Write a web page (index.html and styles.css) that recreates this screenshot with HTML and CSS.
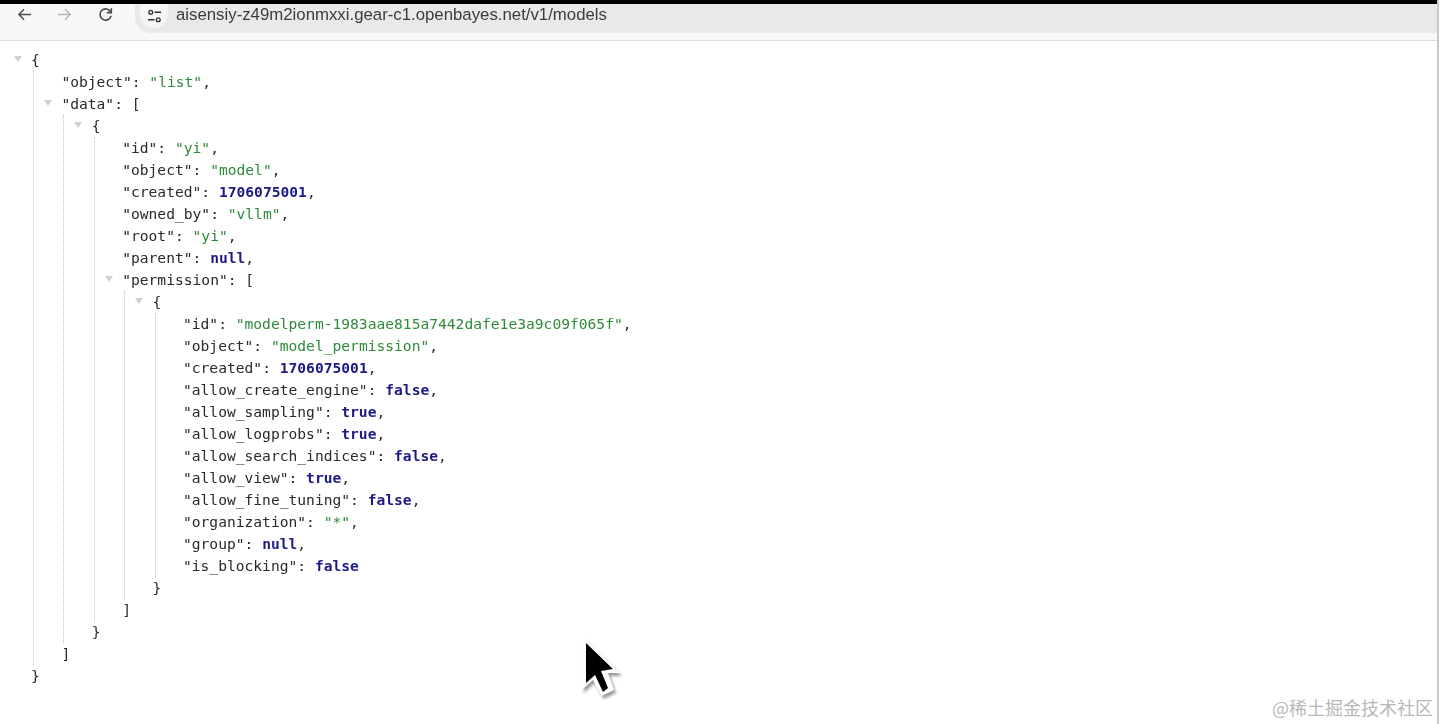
FILE: index.html
```html
<!DOCTYPE html>
<html lang="en">
<head>
<meta charset="utf-8">
<title>models</title>
<link rel="stylesheet" href="styles.css">
</head>
<body>
<div class="frame">
  <header class="chrome">
    <nav class="nav">
      <svg class="nav-icon" viewBox="0 0 16 16"><path d="M15 8H2M7.500 2.500 2 8l5.500 5.500" fill="none" stroke="#4a4a4c" stroke-width="1.5"/></svg>
      <svg class="nav-icon nav-forward" viewBox="0 0 16 16"><path d="M1 8h13M8.500 2.500 14 8l-5.500 5.500" fill="none" stroke="#b4b4b6" stroke-width="1.5"/></svg>
      <svg class="nav-icon nav-reload" viewBox="0 0 16 16"><path d="M13.500 5.200A6 6 0 1 0 14 9.500" fill="none" stroke="#48484a" stroke-width="1.7"/><path d="M14.200 1.200v4.800h-4.800" fill="none" stroke="#48484a" stroke-width="1.7"/></svg>
    </nav>
    <div class="omnibox">
      <span class="site-chip">
        <svg class="site-icon" viewBox="0 0 16 14"><circle cx="4" cy="3" r="2" fill="none" stroke="#333" stroke-width="1.500"/><path d="M8 3h7M1 11h7" stroke="#333" stroke-width="1.800"/><circle cx="12" cy="11" r="2" fill="none" stroke="#333" stroke-width="1.500"/></svg>
      </span>
      <span class="url">aisensiy-z49m2ionmxxi.gear-c1.openbayes.net/v1/models</span>
    </div>
  </header>
  <main class="json">
    <div class="line"><i class="tog"></i>{</div>
    <div class="block">
      <div class="line"><span class="k">"object"</span>: <span class="s">"list"</span>,</div>
      <div class="line"><i class="tog"></i><span class="k">"data"</span>: [</div>
      <div class="block">
        <div class="line"><i class="tog"></i>{</div>
        <div class="block">
          <div class="line"><span class="k">"id"</span>: <span class="s">"yi"</span>,</div>
          <div class="line"><span class="k">"object"</span>: <span class="s">"model"</span>,</div>
          <div class="line"><span class="k">"created"</span>: <span class="n">1706075001</span>,</div>
          <div class="line"><span class="k">"owned_by"</span>: <span class="s">"vllm"</span>,</div>
          <div class="line"><span class="k">"root"</span>: <span class="s">"yi"</span>,</div>
          <div class="line"><span class="k">"parent"</span>: <span class="n">null</span>,</div>
          <div class="line"><i class="tog"></i><span class="k">"permission"</span>: [</div>
          <div class="block">
            <div class="line"><i class="tog"></i>{</div>
            <div class="block">
              <div class="line"><span class="k">"id"</span>: <span class="s">"modelperm-1983aae815a7442dafe1e3a9c09f065f"</span>,</div>
              <div class="line"><span class="k">"object"</span>: <span class="s">"model_permission"</span>,</div>
              <div class="line"><span class="k">"created"</span>: <span class="n">1706075001</span>,</div>
              <div class="line"><span class="k">"allow_create_engine"</span>: <span class="n">false</span>,</div>
              <div class="line"><span class="k">"allow_sampling"</span>: <span class="n">true</span>,</div>
              <div class="line"><span class="k">"allow_logprobs"</span>: <span class="n">true</span>,</div>
              <div class="line"><span class="k">"allow_search_indices"</span>: <span class="n">false</span>,</div>
              <div class="line"><span class="k">"allow_view"</span>: <span class="n">true</span>,</div>
              <div class="line"><span class="k">"allow_fine_tuning"</span>: <span class="n">false</span>,</div>
              <div class="line"><span class="k">"organization"</span>: <span class="s">"*"</span>,</div>
              <div class="line"><span class="k">"group"</span>: <span class="n">null</span>,</div>
              <div class="line"><span class="k">"is_blocking"</span>: <span class="n">false</span></div>
            </div>
            <div class="line">}</div>
          </div>
          <div class="line">]</div>
        </div>
        <div class="line">}</div>
      </div>
      <div class="line">]</div>
    </div>
    <div class="line">}</div>
  </main>
</div>
<svg class="cursor" viewBox="0 0 55 75">
  <defs><filter id="cs" x="-30%" y="-30%" width="160%" height="160%"><feGaussianBlur stdDeviation="1.800"/></filter></defs>
  <path d="M7.500 7 45 43H33l6 17-12.300 6L18 50 6.700 60z" fill="#000" opacity=".4" filter="url(#cs)" transform="translate(2 3)"/>
  <path d="M7.500 7 45 43H33l6 17-12.300 6L18 50 6.700 60z" fill="#fff"/>
  <path d="M11 13l27 26-12 2 7 17-5 4-8-17-9 8z" fill="#000"/>
</svg>
<div class="mark">@稀土掘金技术社区</div>
</body>
</html>
```
FILE: styles.css
```css
html, body {
  margin: 0;
  height: 100%;
  background: #fff;
  overflow: hidden;
}
.frame {
  height: 724px;
  box-sizing: border-box;
  border-right: 2px solid #c9c9cb;
  margin-right: 1px;
  display: flex;
  flex-direction: column;
}
.chrome {
  height: 41px;
  box-sizing: border-box;
  flex: none;
  border-top: 4px solid #000;
  border-bottom: 1px solid #dedede;
  background: #f9f7f8;
  display: flex;
  align-items: flex-start;
}
.nav {
  width: 135px;
  flex: none;
  height: 20px;
  display: flex;
  align-items: center;
  padding-left: 17px;
  box-sizing: border-box;
}
.nav-icon {
  width: 15px;
  height: 15px;
  flex: none;
}
.nav-forward { margin-left: 25px; }
.nav-reload { margin-left: 26px; }
.omnibox {
  flex: 1;
  height: 29px;
  background: #e9e9eb;
  border-bottom-left-radius: 15px;
  display: flex;
  align-items: flex-start;
  filter: blur(.3px);
}
.site-chip {
  width: 28px;
  height: 24px;
  margin-left: 5px;
  border-radius: 0 0 14px 14px;
  background: #f6f6f7;
  display: flex;
  align-items: center;
  justify-content: center;
  flex: none;
}
.site-icon {
  width: 15px;
  height: 14px;
}
.url {
  margin-left: 8px;
  font: 16.8px/21px "Liberation Sans", Arial, sans-serif;
  color: #3c3c3e;
}
.json {
  padding: 8px 0 0 31px;
  font: 14.62px/22px "DejaVu Sans Mono", "Liberation Mono", monospace;
  color: #2a2a2a;
  filter: blur(.35px);
}
.line {
  height: 22px;
  position: relative;
  white-space: pre;
}
.block {
  margin-left: 2px;
  padding-left: 27.4px;
  border-left: 1px dotted #c4c4c4;
}
.tog {
  position: absolute;
  left: -17.500px;
  top: 7px;
  width: 0;
  height: 0;
  border-left: 4px solid transparent;
  border-right: 4px solid transparent;
  border-top: 6px solid #d0d0d0;
}
.k { color: #2a2a2a; }
.s { color: #2f8a3a; }
.n { color: #1c1a85; font-weight: 700; }
.cursor {
  position: absolute;
  left: 575px;
  top: 630px;
  width: 55px;
  height: 75px;
  filter: blur(.4px);
}
.mark {
  position: absolute;
  right: 7px;
  top: 695px;
  font: 18px/24px "Noto Sans CJK SC", sans-serif;
  color: #b8b8b8;
  white-space: nowrap;
}
```
